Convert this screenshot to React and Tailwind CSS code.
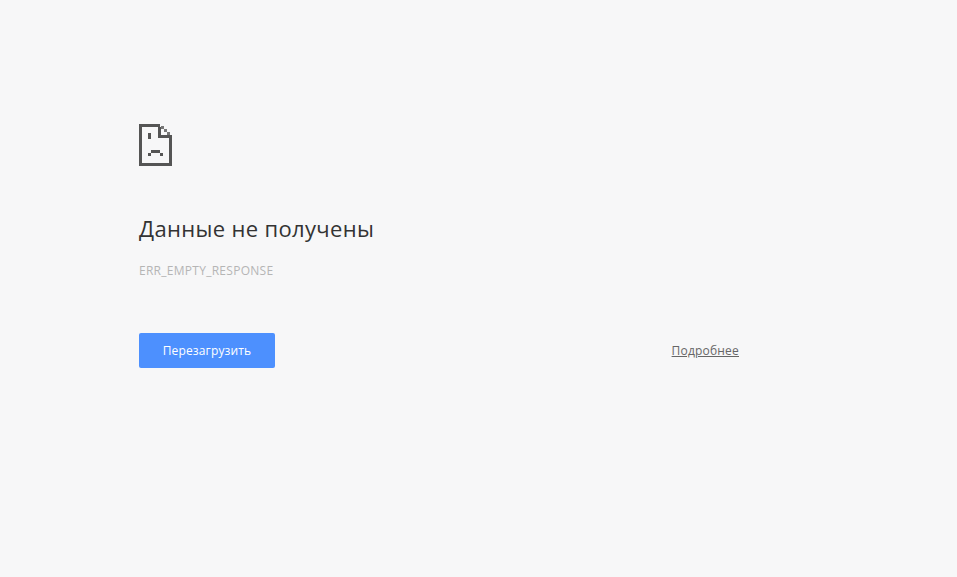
import React from 'react';

function SadFileIcon() {
    return (
        <svg width="33" height="42" viewBox="0 0 33 42" fill="#555555" shapeRendering="crispEdges">
            <path d="M0 0h21v3h-18v36h27v-25h3v28h-33z" />
            <rect x="19" y="3" width="3" height="11" />
            <rect x="19" y="11" width="14" height="3" />
            <rect x="22" y="2" width="3" height="3" fill="#777777" />
            <rect x="25" y="5" width="3" height="3" fill="#777777" />
            <rect x="28" y="8" width="3" height="3" fill="#777777" />
            <rect x="9" y="9" width="3" height="6" />
            <rect x="12" y="26" width="9" height="3" />
            <rect x="9" y="29" width="3" height="3" />
            <rect x="21" y="29" width="3" height="3" />
        </svg>
    );
}

export default function App() {
    return (
        <div className="min-h-[577px] bg-[#f7f7f8] pt-[124px] pl-[139px] font-['Open_Sans','Noto_Sans',sans-serif]">
            <div className="w-[600px]">
                <SadFileIcon />
                <h1 className="mt-[46px] text-[22px] leading-[32px] font-normal tracking-[0.34px] text-[#333333]">Данные не получены</h1>
                <p className="mt-[19px] text-[12px] leading-[16px] tracking-[0.27px] text-[#b5b5b5]">ERR_EMPTY_RESPONSE</p>
                <div className="mt-[54px] flex items-center justify-between">
                    <button className="h-[35px] w-[136px] rounded-[2px] bg-[#4d90fe] text-[12px] font-medium tracking-[0.15px] text-white">Перезагрузить</button>
                    <a className="text-[12px] tracking-[0.2px] text-[#666666] underline">Подробнее</a>
                </div>
            </div>
        </div>
    );
}
